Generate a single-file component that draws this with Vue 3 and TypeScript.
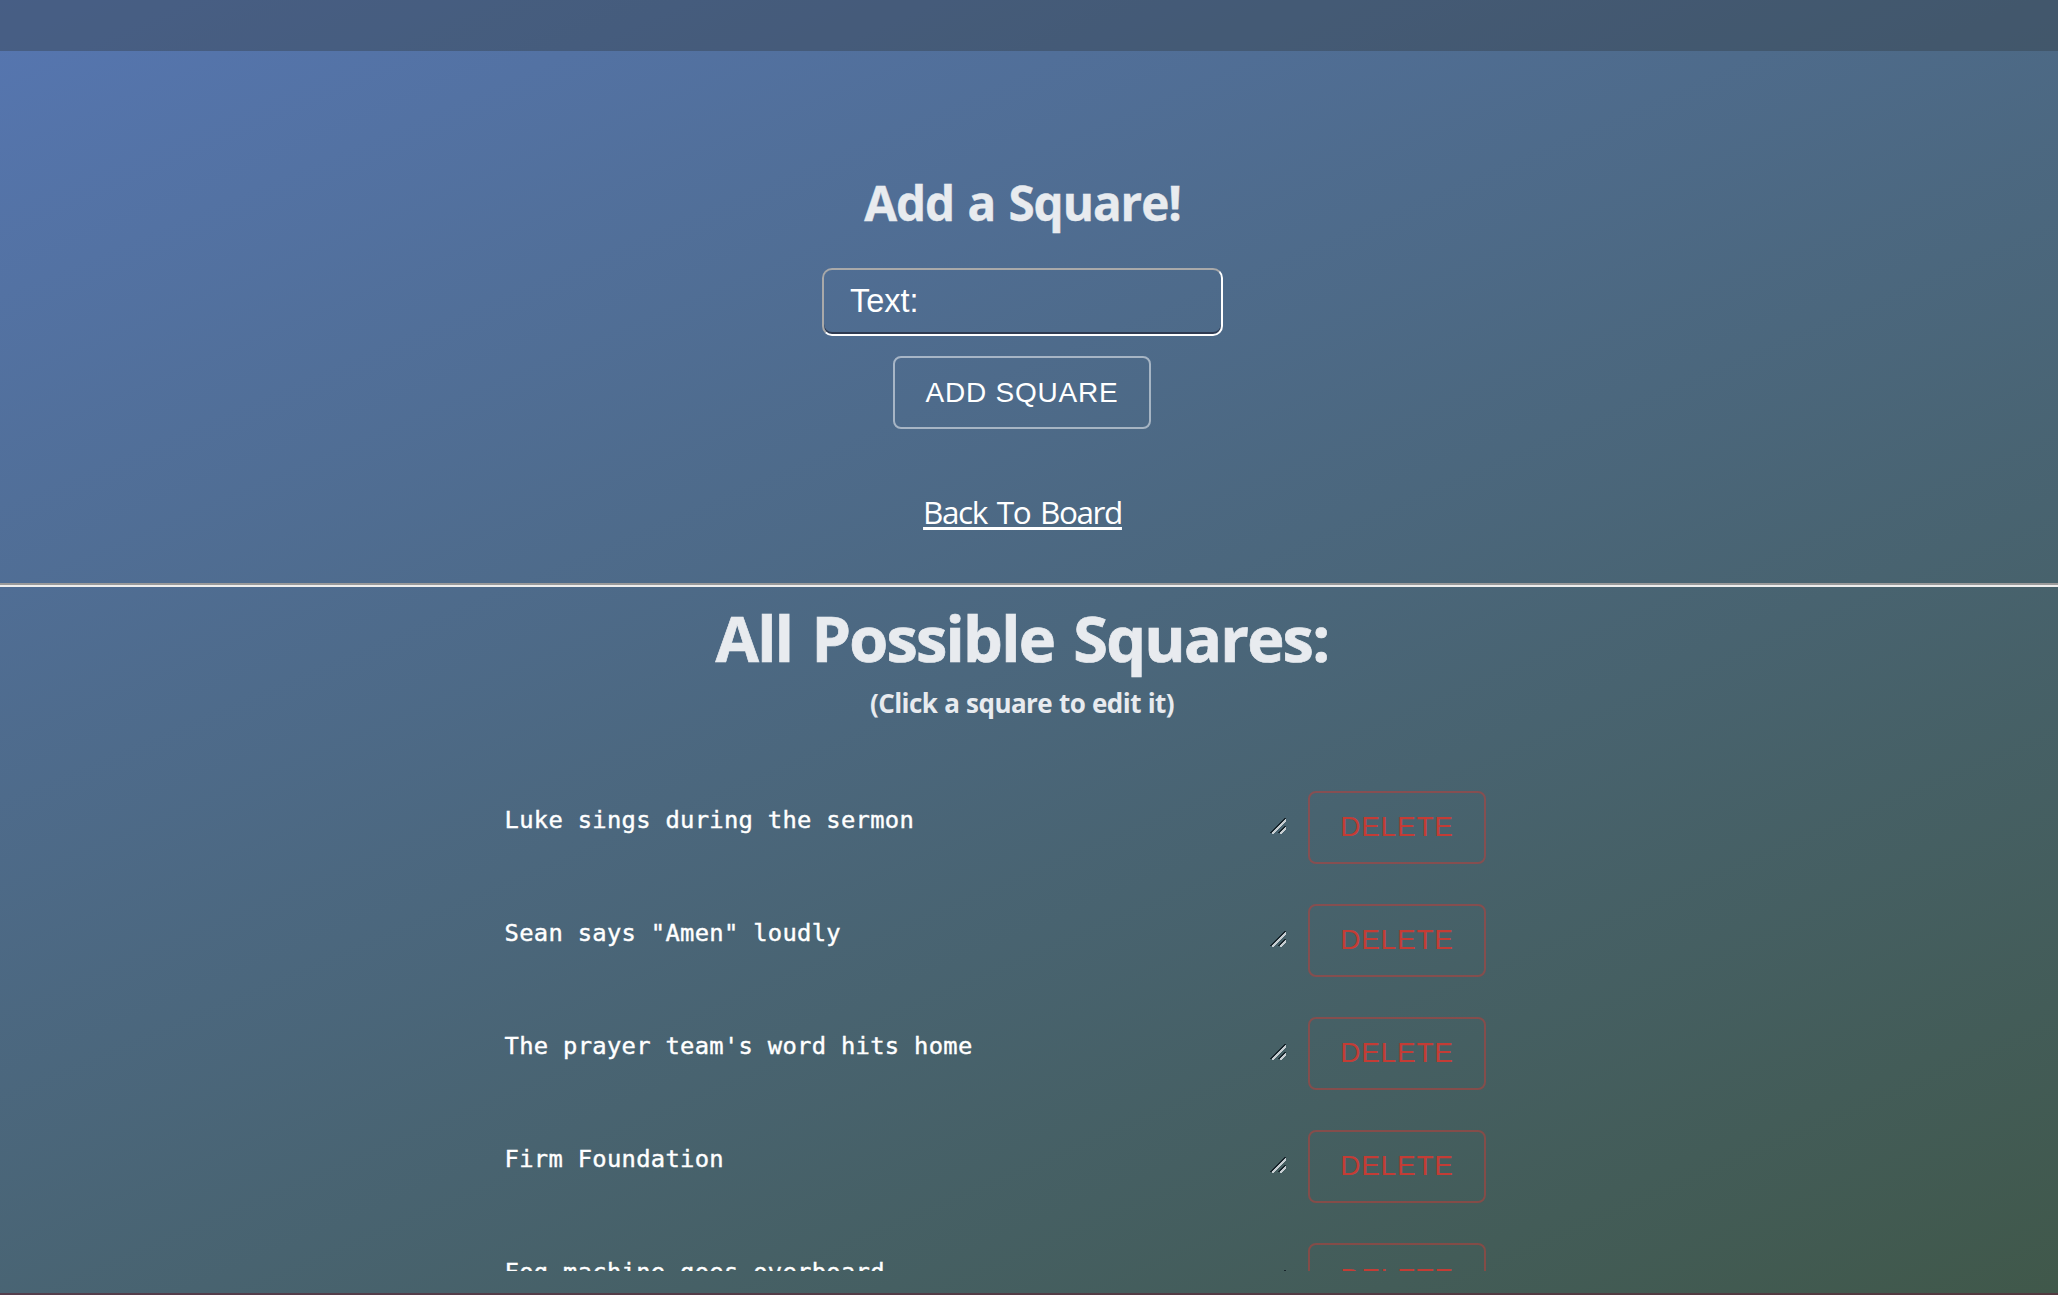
<script setup lang="ts">
import { ref } from 'vue'

const squares = ref<string[]>([
  'Luke sings during the sermon',
  'Sean says "Amen" loudly',
  "The prayer team's word hits home",
  'Firm Foundation',
  'Fog machine goes overboard',
])
</script>

<template>
  <div class="page">
    <header class="bar"></header>
    <section class="add">
      <h2><span>Add a Square!</span></h2>
      <div class="field">Text:</div>
      <button class="btn submit">ADD SQUARE</button>
      <a class="back">Back To Board</a>
    </section>
    <div class="rule"></div>
    <section class="all">
      <h1><span>All Possible Squares:</span></h1>
      <h5><span>(Click a square to edit it)</span></h5>
      <ul class="list">
        <li v-for="s in squares" :key="s" class="row">
          <div class="text">{{ s }}</div>
          <svg class="grip" width="16" height="16" viewBox="0 0 16 16" shape-rendering="crispEdges">
            <g fill="none">
              <path d="M0.5 15L15.5 0" stroke="#17242b" stroke-width="1.6" />
              <path d="M2 16L16 2" stroke="#c6cdd1" stroke-width="2.4" />
              <path d="M8.5 15L15.5 8" stroke="#17242b" stroke-width="1.6" />
              <path d="M10 16L16 10" stroke="#c6cdd1" stroke-width="2.4" />
            </g>
          </svg>
          <button class="btn delete"><span>DELETE</span></button>
        </li>
      </ul>
    </section>
    <footer class="foot"></footer>
  </div>
</template>

<style>
body {
  margin: 0;
  overflow: hidden;
}
</style>

<style scoped>
.page {
  height: 1295px;
  display: flex;
  flex-direction: column;
  overflow: hidden;
  background: linear-gradient(157deg, #5676b1 0%, #40584a 100%);
  font-family: 'Open Sans', 'Noto Sans', sans-serif;
  color: #fff;
}
.bar {
  height: 51px;
  flex: none;
  background: rgba(50, 60, 68, 0.4);
}
.add {
  box-sizing: border-box;
  height: 532px;
  flex: none;
  padding: 120px 13px 0 0;
  display: flex;
  flex-direction: column;
  align-items: center;
}
h1,
h2,
h5 {
  margin: 0;
  font-weight: 700;
  color: #e8ebef;
  white-space: nowrap;
}
h2 {
  font-size: 47.6px;
  line-height: 64px;
  letter-spacing: -1.05px;
  word-spacing: 2px;
  -webkit-text-stroke: 0.4px #e8ebef;
}
.field {
  box-sizing: border-box;
  width: 401px;
  height: 68px;
  margin-top: 33px;
  padding-left: 26px;
  border: 2px solid;
  border-color: #a9a9a9 #fff #fff #a9a9a9;
  border-radius: 10px;
  box-shadow: inset 0 -2px 0 #2f3b52;
  font: 32.4px/62px 'Liberation Sans', Arial, sans-serif;
}
.btn {
  box-sizing: border-box;
  width: 258px;
  height: 73px;
  margin: 20px 0 0;
  padding: 0;
  border: 2px solid rgba(255, 255, 255, 0.5);
  border-radius: 8px;
  background: none;
  color: #fff;
  font: 28px/69px 'Liberation Sans', Arial, sans-serif;
  letter-spacing: 0.8px;
}
.submit {
  margin-right: 1px;
}
.back {
  margin-top: 61px;
  font-size: 31.5px;
  line-height: 44px;
  letter-spacing: -1.4px;
  word-spacing: 3px;
  text-decoration: underline;
  text-decoration-thickness: 3px;
  text-underline-offset: 3px;
  text-decoration-skip-ink: none;
}
.rule {
  height: 2px;
  flex: none;
  border-top: 2px solid #9a9a9a;
  background: #eee;
}
.all {
  height: 684px;
  flex: none;
  display: flex;
  flex-direction: column;
  overflow: hidden;
}
h1,
h5 {
  padding-right: 14px;
  text-align: center;
}
h1 {
  padding-top: 8px;
  font-size: 63px;
  line-height: 86px;
  letter-spacing: -1.75px;
  word-spacing: 4.5px;
  -webkit-text-stroke: 0.7px #e8ebef;
}
h5 {
  padding-top: 4px;
  font-size: 26px;
  line-height: 36px;
  letter-spacing: -0.55px;
  word-spacing: 0.6px;
}
.list {
  margin: 70px 0 0;
  padding: 0 0 0 504.5px;
  list-style: none;
}
.row {
  display: flex;
  height: 73px;
  margin-bottom: 40px;
}
.text {
  width: 765.5px;
  font: 23.8px/58px 'DejaVu Sans Mono', monospace;
  letter-spacing: 0.3px;
  white-space: pre;
  -webkit-text-stroke: 0.4px #fff;
}
.grip {
  margin: 27px 22px 0 0;
}
.delete {
  width: 178px;
  margin: 0;
  color: #c43c35;
  border-color: rgba(196, 60, 53, 0.5);
}
.delete span {
  display: block;
  height: 69px;
  margin-top: -2px;
}
.foot {
  height: 2px;
  flex: none;
  margin-top: 22px;
  background: rgba(90, 45, 60, 0.7);
}
</style>
